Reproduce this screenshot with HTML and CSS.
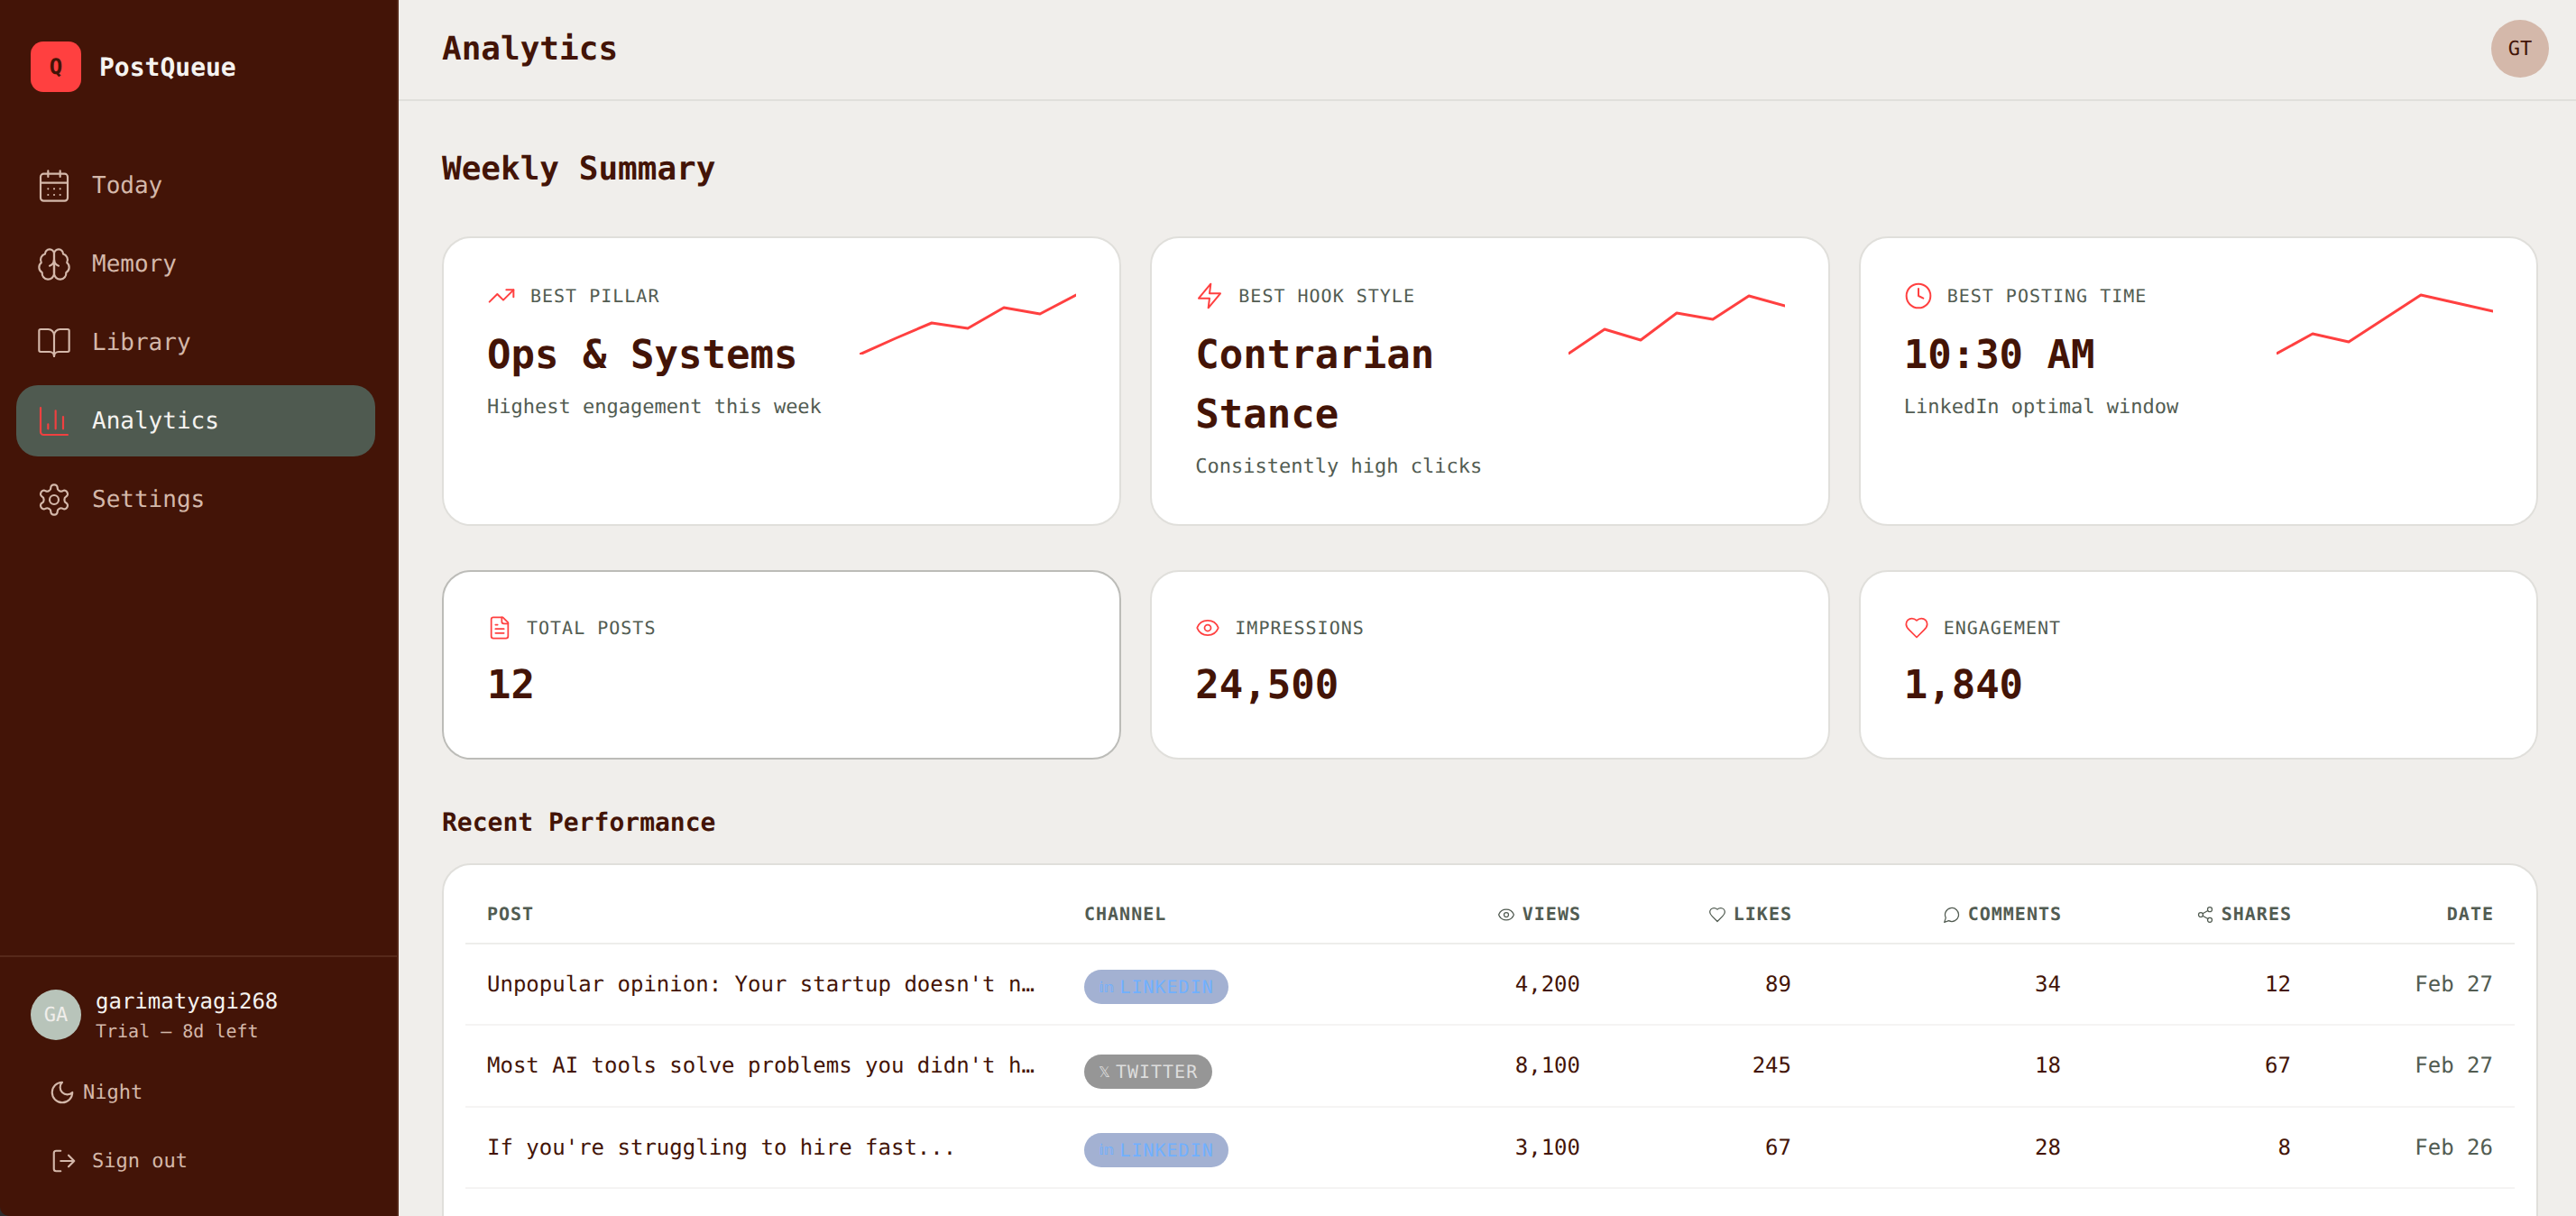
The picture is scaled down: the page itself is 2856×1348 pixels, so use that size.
FILE: index.html
```html
<!DOCTYPE html>
<html lang="en">
<head>
    <meta charset="UTF-8">
    <meta name="viewport" content="width=device-width, initial-scale=1.0">
    <title>Analytics</title>
    <link rel="stylesheet" href="styles.css">
</head>
<body>
    <aside class="sidebar">
        <div class="brand">
            <div class="brand-logo">Q</div>
            <span class="brand-name">PostQueue</span>
        </div>
        <nav class="nav">
            <a class="nav-item">
                <svg class="nav-icon" viewBox="0 0 24 24"><path d="M8 2v4M16 2v4"/><rect x="3" y="4" width="18" height="18" rx="2"/><path d="M3 10h18M8 14h.01M12 14h.01M16 14h.01M8 18h.01M12 18h.01M16 18h.01"/></svg>
                Today
            </a>
            <a class="nav-item">
                <svg class="nav-icon" viewBox="0 0 24 24"><path d="M12 5a3 3 0 1 0-5.997.125 4 4 0 0 0-2.526 5.77 4 4 0 0 0 .556 6.588A4 4 0 1 0 12 18Z"/><path d="M12 5a3 3 0 1 1 5.997.125 4 4 0 0 1 2.526 5.77 4 4 0 0 1-.556 6.588A4 4 0 1 1 12 18Z"/><path d="M15 13a4.5 4.5 0 0 1-3-4 4.5 4.5 0 0 1-3 4"/><path d="M12 18V9"/></svg>
                Memory
            </a>
            <a class="nav-item">
                <svg class="nav-icon" viewBox="0 0 24 24"><path d="M12 7v14"/><path d="M3 18a1 1 0 0 1-1-1V4a1 1 0 0 1 1-1h5a4 4 0 0 1 4 4 4 4 0 0 1 4-4h5a1 1 0 0 1 1 1v13a1 1 0 0 1-1 1h-6a3 3 0 0 0-3 3 3 3 0 0 0-3-3z"/></svg>
                Library
            </a>
            <a class="nav-item active">
                <svg class="nav-icon" viewBox="0 0 24 24"><path d="M3 3v16a2 2 0 0 0 2 2h16"/><path d="M8 17v-3M13 17V5M18 17V9"/></svg>
                Analytics
            </a>
            <a class="nav-item">
                <svg class="nav-icon" viewBox="0 0 24 24"><path d="M12.22 2h-.44a2 2 0 0 0-2 2v.18a2 2 0 0 1-1 1.73l-.43.25a2 2 0 0 1-2 0l-.15-.08a2 2 0 0 0-2.73.73l-.22.38a2 2 0 0 0 .73 2.73l.15.1a2 2 0 0 1 1 1.72v.51a2 2 0 0 1-1 1.74l-.15.09a2 2 0 0 0-.73 2.73l.22.38a2 2 0 0 0 2.73.73l.15-.08a2 2 0 0 1 2 0l.43.25a2 2 0 0 1 1 1.73V20a2 2 0 0 0 2 2h.44a2 2 0 0 0 2-2v-.18a2 2 0 0 1 1-1.73l.43-.25a2 2 0 0 1 2 0l.15.08a2 2 0 0 0 2.73-.73l.22-.39a2 2 0 0 0-.73-2.73l-.15-.08a2 2 0 0 1-1-1.74v-.5a2 2 0 0 1 1-1.74l.15-.09a2 2 0 0 0 .73-2.73l-.22-.38a2 2 0 0 0-2.73-.73l-.15.08a2 2 0 0 1-2 0l-.43-.25a2 2 0 0 1-1-1.73V4a2 2 0 0 0-2-2z"/><circle cx="12" cy="12" r="3"/></svg>
                Settings
            </a>
        </nav>
        <div class="sidebar-footer">
            <div class="user">
                <div class="user-avatar">GA</div>
                <div>
                    <div class="user-name">garimatyagi268</div>
                    <div class="user-plan">Trial — 8d left</div>
                </div>
            </div>
            <a class="footer-link night">
                <svg class="footer-icon" viewBox="0 0 24 24"><path d="M12 3a6 6 0 0 0 9 9 9 9 0 1 1-9-9Z"/></svg>
                Night
            </a>
            <a class="footer-link signout">
                <svg class="footer-icon" viewBox="0 0 24 24"><path d="M9 21H5a2 2 0 0 1-2-2V5a2 2 0 0 1 2-2h4"/><path d="m16 17 5-5-5-5M21 12H9"/></svg>
                Sign out
            </a>
        </div>
    </aside>

    <div class="main">
        <header class="topbar">
            <h1 class="page-title">Analytics</h1>
            <div class="top-avatar">GT</div>
        </header>

        <div class="content">
            <h2 class="section-title">Weekly Summary</h2>

            <div class="card-grid summary-grid">
                <div class="card summary-card">
                    <div class="summary-text">
                        <div class="card-label">
                            <svg class="label-icon" viewBox="0 0 24 24"><path d="M16 7h6v6"/><path d="m22 7-8.5 8.5-5-5L2 17"/></svg>
                            BEST PILLAR
                        </div>
                        <div class="card-value">Ops &amp; Systems</div>
                        <div class="card-sub">Highest engagement this week</div>
                    </div>
                    <svg class="spark" viewBox="0 0 240 80"><polyline points="0,80 40,62 80,45 120,51 160,28 200,35 240,14"/></svg>
                </div>
                <div class="card summary-card">
                    <div class="summary-text">
                        <div class="card-label">
                            <svg class="label-icon" viewBox="0 0 24 24"><path d="M13 2 3 14h9l-1 8 10-12h-9l1-8z"/></svg>
                            BEST HOOK STYLE
                        </div>
                        <div class="card-value">Contrarian Stance</div>
                        <div class="card-sub">Consistently high clicks</div>
                    </div>
                    <svg class="spark" viewBox="0 0 240 80"><polyline points="0,79 40,52 80,64 120,34 160,41 200,15 240,26"/></svg>
                </div>
                <div class="card summary-card">
                    <div class="summary-text">
                        <div class="card-label">
                            <svg class="label-icon" viewBox="0 0 24 24"><circle cx="12" cy="12" r="10"/><path d="M12 6v6l4 2"/></svg>
                            BEST POSTING TIME
                        </div>
                        <div class="card-value">10:30 AM</div>
                        <div class="card-sub">LinkedIn optimal window</div>
                    </div>
                    <svg class="spark" viewBox="0 0 240 80"><polyline points="0,79 40,57 80,66 120,40 160,14 200,23 240,32"/></svg>
                </div>
            </div>

            <div class="card-grid stat-grid">
                <div class="card stat-card hovered">
                    <div class="card-label">
                        <svg class="label-icon small" viewBox="0 0 24 24"><path d="M15 2H6a2 2 0 0 0-2 2v16a2 2 0 0 0 2 2h12a2 2 0 0 0 2-2V7Z"/><path d="M14 2v4a2 2 0 0 0 2 2h4M10 9H8M16 13H8M16 17H8"/></svg>
                        TOTAL POSTS
                    </div>
                    <div class="card-value">12</div>
                </div>
                <div class="card stat-card">
                    <div class="card-label">
                        <svg class="label-icon small" viewBox="0 0 24 24"><path d="M2.06 12.35a1 1 0 0 1 0-.7 10.75 10.75 0 0 1 19.88 0 1 1 0 0 1 0 .7 10.75 10.75 0 0 1-19.88 0"/><circle cx="12" cy="12" r="3"/></svg>
                        IMPRESSIONS
                    </div>
                    <div class="card-value">24,500</div>
                </div>
                <div class="card stat-card">
                    <div class="card-label">
                        <svg class="label-icon small" viewBox="0 0 24 24"><path d="M19 14c1.49-1.46 3-3.21 3-5.5A5.5 5.5 0 0 0 16.5 3c-1.76 0-3 .5-4.5 2-1.5-1.5-2.74-2-4.5-2A5.5 5.5 0 0 0 2 8.5c0 2.3 1.5 4.05 3 5.5l7 7Z"/></svg>
                        ENGAGEMENT
                    </div>
                    <div class="card-value">1,840</div>
                </div>
            </div>

            <h3 class="table-title">Recent Performance</h3>

            <div class="card table-card">
                <table class="perf-table">
                    <colgroup>
                        <col class="col-post"><col class="col-channel"><col class="col-views"><col class="col-likes"><col class="col-comments"><col class="col-shares"><col class="col-date">
                    </colgroup>
                    <thead>
                        <tr>
                            <th>POST</th>
                            <th>CHANNEL</th>
                            <th class="num"><svg class="th-icon" viewBox="0 0 24 24"><path d="M2.06 12.35a1 1 0 0 1 0-.7 10.75 10.75 0 0 1 19.88 0 1 1 0 0 1 0 .7 10.75 10.75 0 0 1-19.88 0"/><circle cx="12" cy="12" r="3"/></svg>VIEWS</th>
                            <th class="num"><svg class="th-icon" viewBox="0 0 24 24"><path d="M19 14c1.49-1.46 3-3.21 3-5.5A5.5 5.5 0 0 0 16.5 3c-1.76 0-3 .5-4.5 2-1.5-1.5-2.74-2-4.5-2A5.5 5.5 0 0 0 2 8.5c0 2.3 1.5 4.05 3 5.5l7 7Z"/></svg>LIKES</th>
                            <th class="num"><svg class="th-icon" viewBox="0 0 24 24"><path d="M7.9 20A9 9 0 1 0 4 16.1L2 22Z"/></svg>COMMENTS</th>
                            <th class="num"><svg class="th-icon" viewBox="0 0 24 24"><circle cx="18" cy="5" r="3"/><circle cx="6" cy="12" r="3"/><circle cx="18" cy="19" r="3"/><path d="m8.59 13.51 6.83 3.98M15.41 6.51l-6.82 3.98"/></svg>SHARES</th>
                            <th class="num">DATE</th>
                        </tr>
                    </thead>
                    <tbody>
                        <tr>
                            <td class="post-cell">Unpopular opinion: Your startup doesn't need more features</td>
                            <td><span class="pill linkedin"><span class="pill-glyph">𝕚𝕟</span>LINKEDIN</span></td>
                            <td class="num">4,200</td><td class="num">89</td><td class="num">34</td><td class="num">12</td><td class="num date">Feb 27</td>
                        </tr>
                        <tr>
                            <td class="post-cell">Most AI tools solve problems you didn't have before</td>
                            <td><span class="pill twitter"><span class="pill-glyph">𝕏</span>TWITTER</span></td>
                            <td class="num">8,100</td><td class="num">245</td><td class="num">18</td><td class="num">67</td><td class="num date">Feb 27</td>
                        </tr>
                        <tr>
                            <td class="post-cell">If you're struggling to hire fast...</td>
                            <td><span class="pill linkedin"><span class="pill-glyph">𝕚𝕟</span>LINKEDIN</span></td>
                            <td class="num">3,100</td><td class="num">67</td><td class="num">28</td><td class="num">8</td><td class="num date">Feb 26</td>
                        </tr>
                    </tbody>
                </table>
            </div>
        </div>
    </div>
</body>
</html>
```

FILE: styles.css
```css
* {
    margin: 0;
    padding: 0;
    box-sizing: border-box;
}

html, body {
    height: 100%;
    overflow: hidden;
}

body {
    display: flex;
    background-color: #2e2e2e;
    color: #431407;
    font-family: "DejaVu Sans Mono", "Liberation Mono", monospace;
    text-rendering: geometricPrecision;
}

svg {
    fill: none;
    stroke: currentColor;
    stroke-linecap: round;
    stroke-linejoin: round;
    flex-shrink: 0;
}

/* sidebar */
.sidebar {
    width: 442px;
    height: 100%;
    flex-shrink: 0;
    display: flex;
    flex-direction: column;
    background-color: #431407;
    border-right: 2px solid #56291a;
    border-bottom-left-radius: 10px;
}

.brand {
    display: flex;
    align-items: center;
    gap: 20px;
    padding: 46px 34px 0;
    height: 102px;
}

.brand-logo {
    width: 56px;
    height: 56px;
    display: flex;
    align-items: center;
    justify-content: center;
    border-radius: 14px;
    background-color: #ff4040;
    color: #431407;
    font-size: 24px;
    font-weight: 700;
}

.brand-name {
    color: #f5f3f0;
    font-size: 28px;
    font-weight: 700;
}

.nav {
    display: flex;
    flex-direction: column;
    gap: 8px;
    margin-top: 64px;
    padding: 0 24px 0 18px;
}

.nav-item {
    height: 79px;
    display: flex;
    align-items: center;
    gap: 22px;
    padding-left: 22px;
    border-radius: 24px;
    color: #d4b8aa;
    font-size: 26px;
}

.nav-item.active {
    background-color: #4f5a50;
    color: #f5f3f0;
}

.nav-item.active .nav-icon {
    color: #f04040;
}

.nav-icon {
    width: 40px;
    height: 40px;
    stroke-width: 1.3;
}

.sidebar-footer {
    margin-top: auto;
    border-top: 2px solid #56291a;
    padding: 31px 34px 0;
    height: 289px;
}

.user {
    display: flex;
    align-items: center;
    gap: 16px;
}

.user-avatar {
    width: 56px;
    height: 56px;
    display: flex;
    align-items: center;
    justify-content: center;
    border-radius: 50%;
    background-color: #b8c4ba;
    color: #f0eeeb;
    font-size: 22px;
}

.user-name {
    color: #f5f3f0;
    font-size: 24px;
    line-height: 36px;
}

.user-plan {
    color: #d4b8aa;
    font-size: 20px;
    line-height: 30px;
}

.footer-link {
    display: flex;
    align-items: center;
    color: #d4b8aa;
    font-size: 22px;
}

.footer-icon {
    width: 30px;
    height: 30px;
    stroke-width: 1.7;
}

.night {
    gap: 8px;
    margin: 38px 0 0 20px;
}

.signout {
    gap: 16px;
    margin: 46px 0 0 22px;
}

/* main area */
.main {
    flex: 1;
    min-width: 0;
    height: 100%;
    display: flex;
    flex-direction: column;
    background-color: #f0eeeb;
}

.topbar {
    height: 112px;
    flex-shrink: 0;
    display: flex;
    align-items: center;
    justify-content: space-between;
    padding: 0 30px 2px 48px;
    border-bottom: 2px solid #e0dfdb;
}

.page-title {
    font-size: 36px;
    font-weight: 700;
}

.top-avatar {
    width: 64px;
    height: 64px;
    display: flex;
    align-items: center;
    justify-content: center;
    border-radius: 50%;
    background-color: #d4b8aa;
    font-size: 22px;
}

.content {
    padding: 48px 42px 0 48px;
}

.section-title {
    font-size: 36px;
    font-weight: 700;
    line-height: 55px;
    margin-bottom: 47px;
}

.card-grid {
    display: grid;
    grid-template-columns: repeat(3, 1fr);
    gap: 32px;
}

.card {
    background-color: #fff;
    border: 2px solid #e0dfdb;
    border-radius: 32px;
}

.card.hovered {
    border-color: #bcbcb8;
}

.summary-card {
    display: flex;
    align-items: flex-start;
    justify-content: space-between;
    gap: 16px;
    padding: 48px 48px 47px;
}

.summary-text {
    flex: 1;
    min-width: 0;
}

.stat-grid {
    margin-top: 49px;
}

.stat-card {
    padding: 48px 48px 47px;
}

.card-label {
    display: flex;
    align-items: center;
    gap: 16px;
    color: #525c52;
    font-size: 20px;
    letter-spacing: 1px;
}

.label-icon {
    width: 32px;
    height: 32px;
    color: #ff4040;
    stroke-width: 1.5;
}

.label-icon.small {
    width: 28px;
    height: 28px;
}

.card-value {
    margin-top: 17px;
    font-size: 44px;
    font-weight: 700;
    line-height: 66px;
}

.card-sub {
    margin-top: 8px;
    color: #525c52;
    font-size: 22px;
    line-height: 33px;
}

.spark {
    width: 240px;
    height: 80px;
    margin-top: 1px;
    color: #ff4040;
    stroke-width: 3;
}

.table-title {
    margin: 49px 0 24px;
    font-size: 28px;
    font-weight: 700;
    line-height: 42px;
}

.table-card {
    padding: 24px 24px 80px;
}

.perf-table {
    width: 100%;
    table-layout: fixed;
    border-collapse: collapse;
}

.col-post { width: 662px; }
.col-channel { width: 400px; }
.col-views { width: 198px; }
.col-likes { width: 234px; }
.col-comments { width: 299px; }
.col-shares { width: 255px; }
.col-date { width: 224px; }

.perf-table th {
    height: 63px;
    padding: 0 24px 2px;
    border-bottom: 2px solid #ededeb;
    color: #525c52;
    font-size: 20px;
    font-weight: 700;
    letter-spacing: 1px;
    text-align: left;
}

.perf-table td {
    height: 90.33px;
    padding: 0 24px;
    border-bottom: 2px solid #f5f4f3;
    font-size: 24px;
}

.perf-table .num {
    text-align: right;
}

.perf-table th.num {
    padding-right: 23px;
    text-align: right;
}

.th-icon {
    width: 20px;
    height: 20px;
    margin-right: 8px;
    vertical-align: -4px;
    stroke-width: 1.5;
}

.post-cell {
    overflow: hidden;
    white-space: nowrap;
    text-overflow: ellipsis;
}

.perf-table .date {
    color: #525c52;
}

.pill {
    height: 38px;
    display: inline-flex;
    align-items: center;
    gap: 6px;
    margin-top: 6px;
    padding: 0 16px;
    border-radius: 19px;
    font-size: 20px;
    letter-spacing: 1px;
}

.pill-glyph {
    font-family: "DejaVu Sans", sans-serif;
    font-size: 16px;
    letter-spacing: 0;
}

.linkedin {
    background-color: #a3b1d2;
    color: #70b0ff;
}

.twitter {
    margin-top: 14px;
    background-color: #969696;
    color: #dddddd;
}
```
